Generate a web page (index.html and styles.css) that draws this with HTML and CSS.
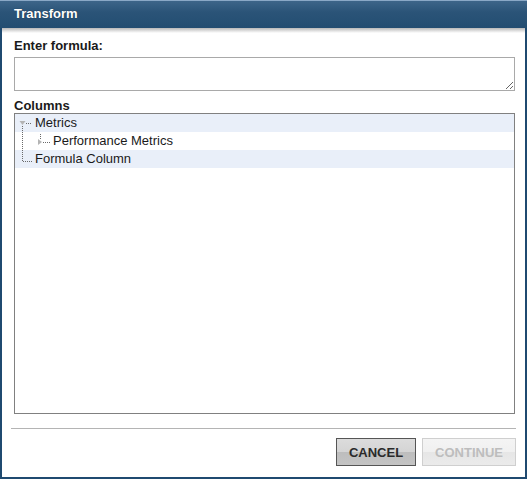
FILE: index.html
```html
<!DOCTYPE html>
<html>
<head>
<meta charset="utf-8">
<link rel="stylesheet" href="styles.css">
</head>
<body>
<div class="dialog">
  <div class="header">Transform</div>
  <div class="shadow"></div>
  <div class="body">
    <label class="label label-formula">Enter formula:</label>
    <textarea class="formula"></textarea>
    <div class="label label-columns">Columns</div>
    <div class="tree">
      <div class="row alt">
        <svg class="con" width="18" height="18" viewBox="0 0 18 18">
          <line x1="7.5" y1="12" x2="7.5" y2="18" class="dot"/>
          <line x1="11" y1="9.5" x2="17" y2="9.5" class="dot"/>
          <polygon points="4.5,7 10.5,7 7.5,11" class="tri"/>
        </svg>
        <span class="txt">Metrics</span>
      </div>
      <div class="row">
        <svg class="con" width="36" height="18" viewBox="0 0 36 18">
          <line x1="7.5" y1="0" x2="7.5" y2="18" class="dot"/>
          <line x1="25.5" y1="2" x2="25.5" y2="7" class="dot"/>
          <line x1="28" y1="10.5" x2="35" y2="10.5" class="dot"/>
          <polygon points="23,7 23,13 27,10" class="tri"/>
        </svg>
        <span class="txt">Performance Metrics</span>
      </div>
      <div class="row alt">
        <svg class="con" width="18" height="18" viewBox="0 0 18 18">
          <line x1="7.5" y1="0" x2="7.5" y2="11" class="dot"/>
          <line x1="8" y1="11.5" x2="17" y2="11.5" class="dot"/>
        </svg>
        <span class="txt">Formula Column</span>
      </div>
    </div>
  </div>
  <div class="footer">
    <button class="btn btn-cancel">CANCEL</button>
    <button class="btn btn-continue" disabled>CONTINUE</button>
  </div>
</div>
</body>
</html>
```
FILE: styles.css
```css
html, body {
  margin: 0;
  padding: 0;
  background: #ffffff;
}
.dialog {
  width: 527px;
  height: 479px;
  box-sizing: border-box;
  border: 2px solid #1f4a70;
  border-top: 0;
  background: #ffffff;
  font-family: "Liberation Sans", Arial, sans-serif;
  font-size: 13px;
  color: #1a1a1a;
  display: flex;
  flex-direction: column;
}
.header {
  height: 27px;
  border-top: 1px solid #8aa8c6;
  background: linear-gradient(#3d6589, #2b5478 40%, #234d71);
  color: #ffffff;
  font-weight: bold;
  font-size: 13px;
  line-height: 26px;
  text-shadow: 0 0 1px rgba(0,0,0,0.5);
  margin: 0 -2px;
  padding-left: 14px;
}
.shadow {
  height: 5px;
  background: linear-gradient(#b8b8b8, #ffffff);
}
.body {
  padding: 0 10px 0 12px;
  display: flex;
  flex-direction: column;
}
.label {
  font-weight: bold;
  font-size: 13px;
  line-height: 15px;
  color: #1a1a1a;
}
.label-formula {
  margin-top: 5px;
}
.formula {
  margin: 4px 0 0 0;
  width: 501px;
  height: 34px;
  box-sizing: border-box;
  border: 1px solid #a9a9a9;
  padding: 2px;
  font-family: "Liberation Sans", Arial, sans-serif;
  font-size: 13px;
}
.label-columns {
  margin-top: 7px;
  line-height: 15px;
}
.tree {
  width: 501px;
  height: 301px;
  box-sizing: border-box;
  border: 1px solid #808080;
  margin-top: 0;
  display: flex;
  flex-direction: column;
}
.row {
  height: 18px;
  display: flex;
  align-items: center;
  gap: 2px;
}
.row.alt {
  background: #e9eff9;
}
.con {
  display: block;
  flex: none;
}
.dot {
  stroke: #6a6a6a;
  stroke-width: 1;
  stroke-dasharray: 1 1;
}
.tri {
  fill: #b4b4b4;
}
.txt {
  font-size: 13px;
  color: #1a1a1a;
  line-height: 18px;
}
.footer {
  margin: 14px 9px 0 9px;
  border-top: 1px solid #b4b4b4;
  display: flex;
  justify-content: flex-end;
  gap: 6px;
  padding-top: 9px;
}
.btn {
  height: 28px;
  box-sizing: border-box;
  font-family: "Liberation Sans", Arial, sans-serif;
  font-weight: bold;
  font-size: 13px;
  padding: 0;
  cursor: pointer;
}
.btn-cancel {
  width: 80px;
  border: 1px solid #555555;
  background: linear-gradient(#dcdcdc 0%, #d4d4d4 50%, #bdbdbd 51%, #c4c4c4 100%);
  color: #2a2a2a;
}
.btn-continue {
  width: 94px;
  border: 1px solid #cfcfcf;
  background: linear-gradient(#f4f4f4 0%, #f0f0f0 50%, #e6e6e6 51%, #ebebeb 100%);
  color: #bdbdbd;
}
```
